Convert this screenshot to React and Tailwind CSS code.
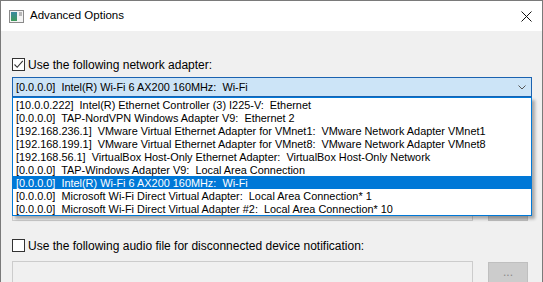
import React from "react";

const items = [
  "[10.0.0.222]  Intel(R) Ethernet Controller (3) I225-V:  Ethernet",
  "[0.0.0.0]  TAP-NordVPN Windows Adapter V9:  Ethernet 2",
  "[192.168.236.1]  VMware Virtual Ethernet Adapter for VMnet1:  VMware Network Adapter VMnet1",
  "[192.168.199.1]  VMware Virtual Ethernet Adapter for VMnet8:  VMware Network Adapter VMnet8",
  "[192.168.56.1]  VirtualBox Host-Only Ethernet Adapter:  VirtualBox Host-Only Network",
  "[0.0.0.0]  TAP-Windows Adapter V9:  Local Area Connection",
  "[0.0.0.0]  Intel(R) Wi-Fi 6 AX200 160MHz:  Wi-Fi",
  "[0.0.0.0]  Microsoft Wi-Fi Direct Virtual Adapter:  Local Area Connection* 1",
  "[0.0.0.0]  Microsoft Wi-Fi Direct Virtual Adapter #2:  Local Area Connection* 10",
];

function Check({ checked }) {
  return (
    <div className="w-[13px] h-[13px] border border-[#333333] bg-white flex items-center justify-center shrink-0">
      {checked && (
        <svg width="11" height="11" viewBox="0 0 11 11">
          <path d="M1.5 5.5 L4.2 8.3 L9.8 1.8" fill="none" stroke="#333333" strokeWidth="1.1" />
        </svg>
      )}
    </div>
  );
}

export default function App() {
  return (
    <div
      className="w-[543px] h-[282px] overflow-hidden flex flex-col border-l border-r border-t border-[#7a7a7a] text-[12px] text-black"
      style={{ fontFamily: '"Segoe UI", "Liberation Sans", Arial, sans-serif' }}
    >
      <div className="h-[30px] bg-white flex items-center shrink-0">
        <svg className="ml-[8px]" width="15" height="13" viewBox="0 0 15 13">
          <rect x="0.5" y="0.5" width="14" height="12" fill="#f4f4f4" stroke="#8a8a8a" />
          <defs>
            <linearGradient id="g1" x1="0" y1="0" x2="0" y2="1">
              <stop offset="0" stopColor="#3a8aa0" />
              <stop offset="1" stopColor="#3f9a5a" />
            </linearGradient>
          </defs>
          <rect x="2" y="2" width="6" height="9" fill="url(#g1)" />
          <rect x="10" y="2" width="3" height="4" fill="#b8b8b8" />
        </svg>
        <span className="ml-[6px] text-[11.5px] leading-none">Advanced Options</span>
        <div className="ml-auto mr-[10px] w-[11px] h-[11px]">
          <svg width="11" height="11" viewBox="0 0 11 11">
            <path d="M0.5 0.5 L10.5 10.5 M10.5 0.5 L0.5 10.5" stroke="#111" strokeWidth="1" />
          </svg>
        </div>
      </div>
      <div className="flex-1 bg-[#f0f0f0] pl-[11px] pt-[27px] flex flex-col">
        <div className="flex items-center h-[13px]">
          <Check checked />
          <span className="ml-[3px] leading-none">Use the following network adapter:</span>
        </div>
        <div className="relative mt-[6px] w-[520px] h-[20px] border border-[#1a62b0] bg-[#cce4f7] flex items-center text-[10.9px]">
          <span className="ml-[3px] whitespace-pre leading-none">[0.0.0.0]  Intel(R) Wi-Fi 6 AX200 160MHz:  Wi-Fi</span>
          <svg className="ml-auto mr-[5px]" width="8" height="5" viewBox="0 0 8 5">
            <path d="M0.5 0.5 L4 4 L7.5 0.5" fill="none" stroke="#555" strokeWidth="1" />
          </svg>
          <div className="absolute left-[-1px] top-[19px] w-[520px] border border-[#0078d7] bg-white z-10 shadow-[3px_3px_3px_rgba(0,0,0,0.3)] flex flex-col">
            {items.map((t, i) => (
              <div
                key={i}
                className={
                  "h-[13px] flex items-center pl-[3px] pt-[1px] whitespace-pre leading-none " +
                  (i === 6 ? "bg-[#0078d7] text-white" : "")
                }
              >
                {t}
              </div>
            ))}
          </div>
        </div>
        <div className="mt-[102px] flex h-[22px]">
          <div className="w-[461px] border border-[#cccccc] bg-[#f0f0f0]" />
          <div className="ml-[15px] w-[40px] border border-[#bfbfbf] bg-[#cccccc]" />
        </div>
        <div className="mt-[18px] flex items-center h-[13px]">
          <Check />
          <span className="ml-[3px] leading-none">Use the following audio file for disconnected device notification:</span>
        </div>
        <div className="mt-[9px] flex h-[22px]">
          <div className="w-[461px] border border-[#cccccc] bg-[#f0f0f0]" />
          <div className="ml-[15px] mt-[1px] w-[40px] h-[21px] border border-[#bfbfbf] bg-[#cccccc] flex items-center justify-center text-[#8a8a8a] leading-none pb-[2px]">...</div>
        </div>
      </div>
    </div>
  );
}
